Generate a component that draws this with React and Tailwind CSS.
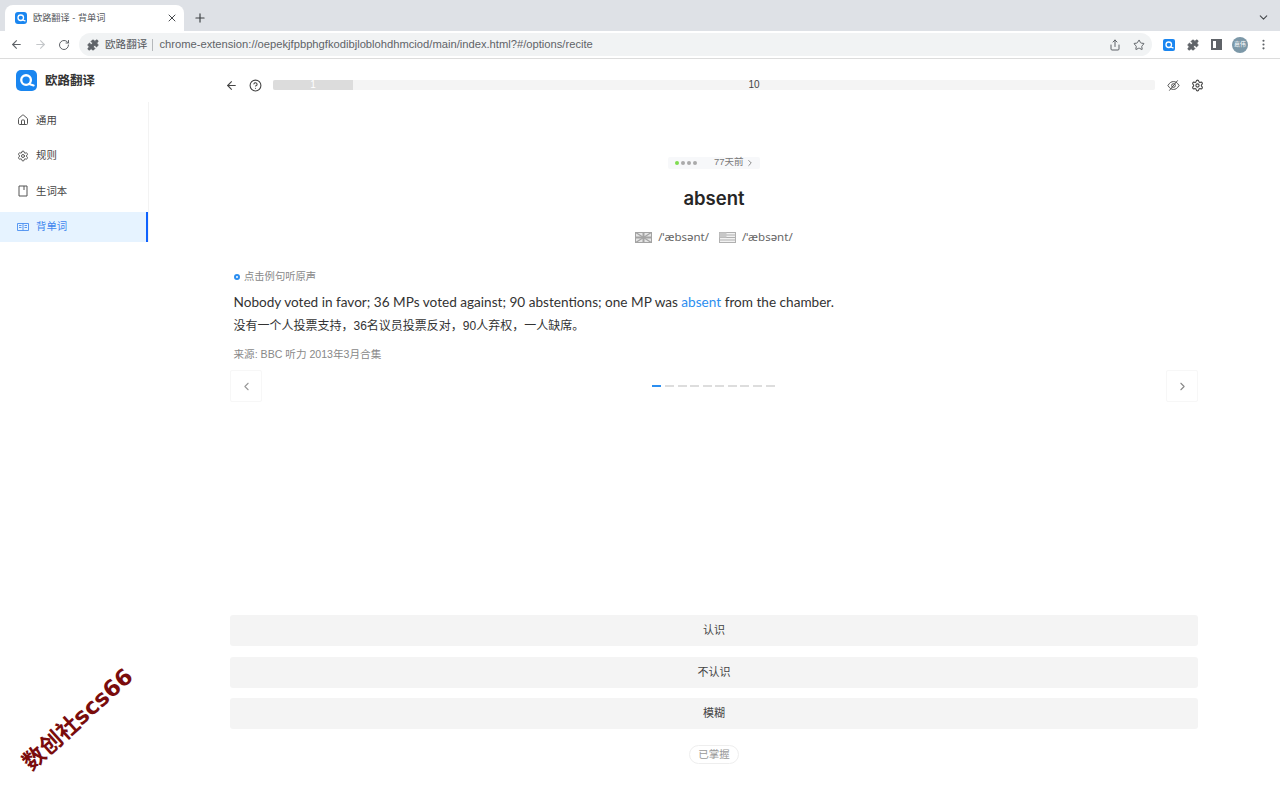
import React from "react";
import {
  ArrowLeft, ArrowRight, RotateCw, Puzzle, Share, Star, EllipsisVertical, ChevronDown, X, Plus,
  CircleHelp, Settings, House, ChevronLeft, ChevronRight,
} from "lucide-react";

const font = "font-['Liberation_Sans','Noto_Sans_CJK_SC',sans-serif]";

function Logo({ size = "w-5 h-5", radius = "rounded-[5px]" }) {
  return (
    <div className={`${size} ${radius} bg-[#1a86f0] shrink-0`}>
      <svg viewBox="0 0 20 20" className="w-full h-full">
        <circle cx="9.6" cy="9.6" r="4.6" fill="none" stroke="#fff" strokeWidth="2.2" />
        <path d="M12.5 13.4 L16.8 14.8" stroke="#fff" strokeWidth="2" strokeLinecap="round" />
      </svg>
    </div>
  );
}

function UkFlag() {
  return (
    <svg viewBox="0 0 17 11" className="w-[17px] h-[11px]" fill="none" stroke="#a3a3a3">
      <rect x="0.5" y="0.5" width="16" height="10" fill="#e5e5e5" />
      <path d="M0 0 L17 11 M17 0 L0 11" strokeWidth="1.2" />
      <path d="M8.5 0 V11 M0 5.5 H17" strokeWidth="2" />
    </svg>
  );
}

function UsFlag() {
  return (
    <svg viewBox="0 0 17 11" className="w-[17px] h-[11px]" fill="none" stroke="#b0b0b0">
      <rect x="0.5" y="0.5" width="16" height="10" fill="#f2f2f2" />
      <path d="M0 3 H17 M0 5.5 H17 M0 8 H17" />
      <rect x="0.5" y="0.5" width="7" height="5" fill="#c8c8c8" stroke="none" />
    </svg>
  );
}

function PageIcon() {
  return (
    <svg viewBox="0 0 12 12" className="w-[12px] h-[12px]" fill="none" stroke="currentColor">
      <path d="M2 1 H10 V11 H2 Z M7 1 V5" />
    </svg>
  );
}

function OpenBookIcon() {
  return (
    <svg viewBox="0 0 12 12" className="w-[12px] h-[12px]" fill="none" stroke="currentColor">
      <path d="M0.5 2.5 H11.5 V9.5 H0.5 Z M6 2.5 V9.5 M2 4.5 H4.5 M2 6.5 H4.5 M7.5 4.5 H10 M7.5 6.5 H10" strokeWidth="0.9" />
    </svg>
  );
}

function HiddenEyeIcon() {
  return (
    <svg viewBox="0 0 14 14" className="ml-[12px] w-[13px] h-[13px]" fill="none" stroke="currentColor">
      <path d="M1 7 C3 3.6 5 2.8 7 2.8 C9 2.8 11 3.6 13 7 C11 10.4 9 11.2 7 11.2 C5 11.2 3 10.4 1 7 Z" />
      <circle cx="7" cy="7" r="2" />
      <path d="M2.5 12.5 L11.5 1.5" />
    </svg>
  );
}

function BrowserBar() {
  return (
    <div className="shrink-0">
      <div className="h-[31px] bg-[#dee1e6] flex items-end pl-[5px] pr-[10px]">
        <div className="w-[179px] h-[26px] bg-white rounded-t-lg flex items-center pl-[10px] pr-[6px]">
          <Logo size="w-[12px] h-[12px]" radius="rounded-[3px]" />
          <span className="ml-[6px] pt-[1px] text-[9.2px] text-[#55585c] flex-1">欧路翻译 - 背单词</span>
          <X size={12} className="text-[#45484c]" />
        </div>
        <div className="ml-[9px] h-[26px] flex items-center">
          <Plus size={14} strokeWidth={2} className="text-[#3c4043]" />
        </div>
        <div className="ml-auto h-[26px] flex items-center pb-[1px]">
          <ChevronDown size={13} className="text-[#45484c]" />
        </div>
      </div>
      <div className="h-[28px] bg-white border-b border-[#dcdcdc] flex items-center pl-[10px] pr-[10px]">
        <ArrowLeft size={13} className="text-[#5f6368]" />
        <ArrowRight size={13} className="ml-[11px] text-[#c4c7ca]" />
        <RotateCw size={12} className="ml-[11px] text-[#5f6368]" />
        <div className="ml-[9px] w-[1073px] h-[23px] bg-[#f1f3f4] rounded-full flex items-center pl-[8px] pr-[7px]">
          <Puzzle size={12} fill="#5f6368" className="text-[#5f6368]" />
          <span className="ml-[6px] text-[10.6px] text-[#55585c]">欧路翻译</span>
          <span className="ml-[5px] w-px h-[12px] bg-[#b5b8bb]" />
          <span className="ml-[6px] text-[11.2px] text-[#5f6368]">chrome-extension://oepekjfpbphgfkodibjloblohdhmciod/main/index.html?#/options/recite</span>
          <Share size={12} className="ml-auto text-[#5f6368]" />
          <Star size={12} className="ml-[12px] text-[#5f6368]" />
        </div>
        <div className="ml-[11px]"><Logo size="w-[12px] h-[12px]" radius="rounded-[2px]" /></div>
        <Puzzle size={12} fill="#5f6368" className="ml-[12px] text-[#5f6368]" />
        <div className="ml-[12px] w-[11px] h-[11px] border-2 border-[#5f6368] flex justify-end">
          <div className="w-[4px] bg-[#5f6368]" />
        </div>
        <div className="ml-[10px] w-[16px] h-[16px] rounded-full bg-[#7c98a8] text-white text-[6px] flex items-center justify-center">嘉伟</div>
        <EllipsisVertical size={13} className="ml-[9px] text-[#5f6368]" />
      </div>
    </div>
  );
}

function Sidebar() {
  const items = [
    { label: "通用", icon: <House size={12} /> },
    { label: "规则", icon: <Settings size={12} /> },
    { label: "生词本", icon: <PageIcon /> },
  ];
  return (
    <aside className="w-[149px] shrink-0">
      <div className="h-[43px] flex items-center pl-[16px]">
        <Logo size="w-[21px] h-[21px]" />
        <span className="ml-[8px] pt-[1px] text-[12.5px] font-bold text-[#333]">欧路翻译</span>
      </div>
      <div className="border-r border-[#f3f3f3] pt-[3px]">
        {items.map((item) => (
          <div key={item.label} className="h-[30px] mb-[5.5px] flex items-center pl-[17px] text-[#555]">
            {item.icon}
            <span className="ml-[7px] pt-[1px] text-[10.4px] text-[#444]">{item.label}</span>
          </div>
        ))}
        <div className="h-[30px] flex items-center pl-[17px] bg-[#e6f3ff] border-r-2 border-[#0f62fe] text-[#4a8ff0]">
          <OpenBookIcon />
          <span className="ml-[7px] pt-[1px] text-[10.4px] text-[#3f86ee]">背单词</span>
        </div>
      </div>
    </aside>
  );
}

function ActionButton({ label }) {
  return (
    <div className="h-[31px] rounded-[3px] bg-[#f4f4f4] flex items-center justify-center text-[11px] text-[#444]">
      {label}
    </div>
  );
}

export default function App() {
  return (
    <div className={`${font} relative w-[1280px] h-[800px] overflow-hidden bg-white flex flex-col`}>
      <BrowserBar />
      <div className="flex flex-1">
        <Sidebar />
        <main className="w-[968px] ml-[81px]">
          <div className="ml-[-5.5px] w-[979.5px] h-[12px] mt-[20px] flex items-center text-[#444]">
            <ArrowLeft size={13} />
            <CircleHelp size={13} className="ml-[11px]" />
            <div className="ml-[11.5px] flex-1 h-[10px] bg-[#f4f4f4] rounded-[2px] flex text-[10px] leading-[10px]">
              <div className="w-[80px] bg-[#dcdcdc] rounded-l-[2px] text-white text-center">1</div>
              <div className="flex-1 text-center text-[#444]">10</div>
            </div>
            <HiddenEyeIcon />
            <Settings size={13} className="ml-[11px]" />
          </div>

          <div className="mt-[65.5px] flex justify-center">
            <div className="w-[92px] h-[12px] bg-[#f7f8fa] rounded-[2px] flex items-center pl-[7px] text-[9.5px] text-[#777]">
              <span className="w-[4px] h-[4px] rounded-full bg-[#7fdc50]" />
              <span className="ml-[2px] w-[4px] h-[4px] rounded-full bg-[#aaa]" />
              <span className="ml-[2px] w-[4px] h-[4px] rounded-full bg-[#aaa]" />
              <span className="ml-[2px] w-[4px] h-[4px] rounded-full bg-[#aaa]" />
              <span className="ml-[17px]">77天前</span>
              <ChevronRight size={10} className="ml-[1px]" />
            </div>
          </div>
          <h1 className="mt-[15.5px] text-center text-[18.5px] leading-[28px] font-semibold text-[#262626] font-['Inter']">absent</h1>
          <div className="mt-[16px] flex justify-center items-center text-[11.5px] leading-[18px] text-[#666] font-['Noto_Sans']">
            <UkFlag />
            <span className="ml-[6px]">/ˈæbsənt/</span>
            <span className="ml-[10px]"><UsFlag /></span>
            <span className="ml-[6px]">/ˈæbsənt/</span>
          </div>

          <div className="mt-[24px] pl-[4px] flex items-center text-[10.3px] leading-[14px] text-[#888]">
            <span className="w-[6px] h-[6px] rounded-full border-2 border-[#2b8ef0]" />
            <span className="ml-[4px]">点击例句听原声</span>
          </div>
          <p className="mt-[7.5px] pl-[3.5px] text-[13.6px] leading-[20px] text-[#333] font-['Lato']">
            Nobody voted in favor; 36 MPs voted against; 90 abstentions; one MP was <span className="text-[#2b8ef0]">absent</span> from the chamber.
          </p>
          <p className="mt-[4.5px] pl-[3.5px] text-[12px] leading-[20px] text-[#333]">没有一个人投票支持，36名议员投票反对，90人弃权，一人缺席。</p>
          <p className="mt-[10.5px] pl-[3.5px] text-[10.6px] leading-[14px] text-[#888]">来源: BBC 听力 2013年3月合集</p>

          <div className="mt-[9.5px] flex items-center justify-between">
            <div className="w-[32px] h-[32px] border border-[#f7f7f7] rounded-[2px] flex items-center justify-center text-[#999]">
              <ChevronLeft size={13} />
            </div>
            <div className="flex gap-[3.6px] ml-[-1px]">
              {[0, 1, 2, 3, 4, 5, 6, 7, 8, 9].map((i) => (
                <span key={i} className={i === 0 ? "w-[9px] h-[2px] bg-[#2b8ef0]" : "w-[9px] h-[2px] bg-[#dddddd]"} />
              ))}
            </div>
            <div className="w-[32px] h-[32px] border border-[#f7f7f7] rounded-[2px] flex items-center justify-center text-[#888]">
              <ChevronRight size={13} />
            </div>
          </div>

          <div className="mt-[213px] flex flex-col gap-[10.5px]">
            <ActionButton label="认识" />
            <ActionButton label="不认识" />
            <ActionButton label="模糊" />
          </div>
          <div className="mt-[16px] flex justify-center">
            <div className="w-[50px] h-[19px] rounded-full border border-[#eeeeee] flex items-center justify-center text-[10.5px] text-[#999]">已掌握</div>
          </div>
        </main>
      </div>
      <div className="absolute left-[8px] top-[706px] -rotate-[42deg] text-[22.5px] leading-[26px] font-bold text-[#7a0c0c] whitespace-nowrap font-['DejaVu_Sans','Noto_Sans_CJK_SC',sans-serif]">
        数创社scs66
      </div>
    </div>
  );
}
